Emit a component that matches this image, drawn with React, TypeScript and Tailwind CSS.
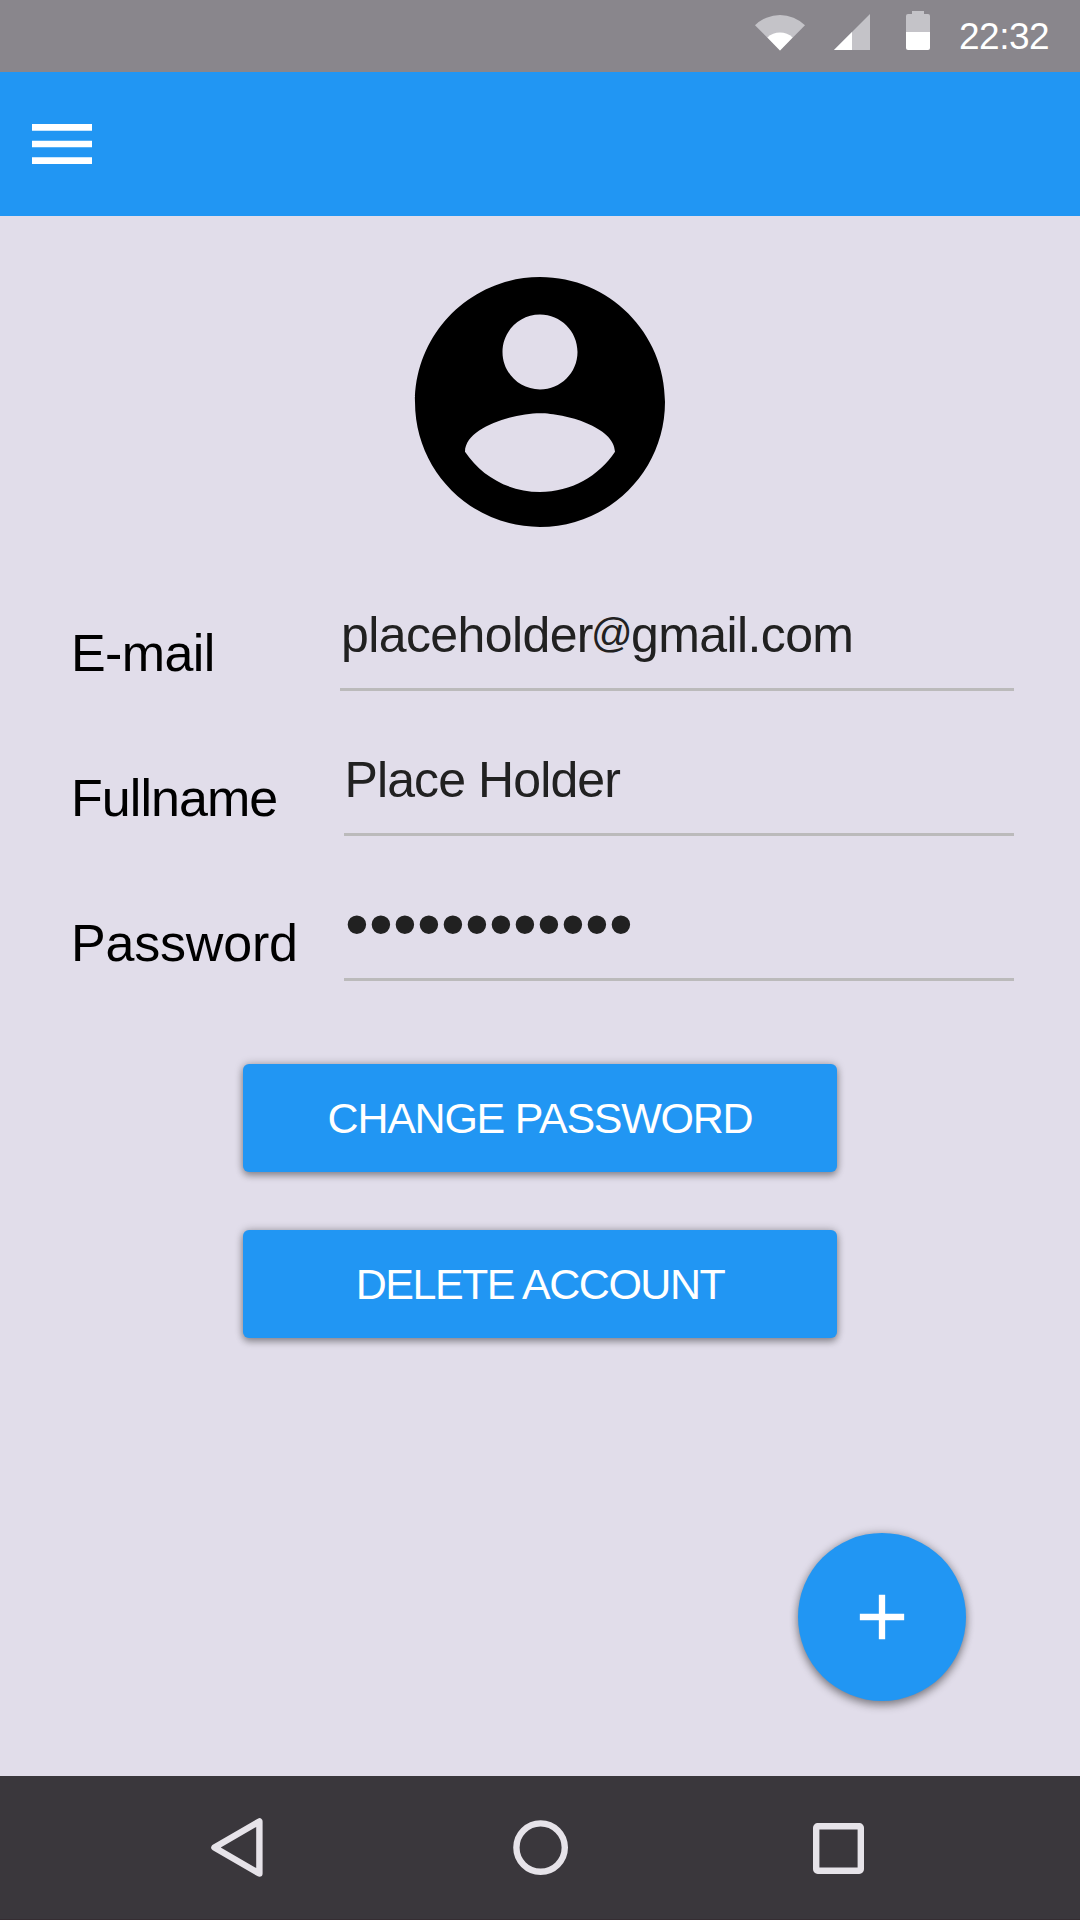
import type { ReactNode } from "react";

function StatusBar() {
  return (
    <header className="flex h-[72px] items-center bg-[#89868c] pl-[755px] text-white">
      <svg className="-mt-[7px] h-[37px] w-[50px]" viewBox="0 0 50 37">
        <path d="M25 36.5 0 11.2A35.8 35.8 0 0 1 50 11.2Z" fill="#c4c3c8" />
        <path d="M25 36.5 12.4 23.6A18 18 0 0 1 37.6 23.6Z" fill="#fff" />
      </svg>
      <svg className="-mt-[8px] ml-[29px] h-[36px] w-[36px]" viewBox="0 0 36 36">
        <path d="M0 36 36 0V36Z" fill="#c4c3c8" />
        <path d="M0 36 18 18V36Z" fill="#fff" />
      </svg>
      <svg className="-mt-[11px] ml-[36px] h-[39px] w-[24px]" viewBox="0 0 24 39">
        <path d="M6 0H18V3H22a2 2 0 0 1 2 2V21H0V5A2 2 0 0 1 2 3H6Z" fill="#c4c3c8" />
        <path d="M0 21H24V37a2 2 0 0 1-2 2H2a2 2 0 0 1-2-2Z" fill="#fff" />
      </svg>
      <span className="ml-[29px] pt-[2px] text-[37px] leading-[70px] tracking-[-0.5px]">22:32</span>
    </header>
  );
}

function AppBar() {
  return (
    <nav className="flex h-[144px] items-center bg-[#2196f3] pl-[22px]">
      <button aria-label="Menu">
        <svg className="block size-[80px]" viewBox="0 0 24 24" fill="#fff">
          <path d="M3 18h18v-2H3v2zm0-5h18v-2H3v2zm0-7v2h18V6H3z" />
        </svg>
      </button>
    </nav>
  );
}

function Field({ label, labelClass, inputClass, children }: { label: string; labelClass: string; inputClass: string; children: ReactNode }) {
  return (
    <div className="flex h-[145px] items-end justify-between pr-[66px] pl-[71px]">
      <span className={`text-[52px] leading-[76px] text-black ${labelClass}`}>{label}</span>
      <div className={`h-[110px] border-b-[3px] border-[#bbbabb] text-[50px] whitespace-nowrap text-[#212121] ${inputClass}`}>
        {children}
      </div>
    </div>
  );
}

function RaisedButton({ className, children }: { className: string; children: ReactNode }) {
  return (
    <button
      className={`h-[108px] w-[594px] rounded-[6px] bg-[#2196f3] text-center text-[43px] leading-[108px] whitespace-nowrap text-white shadow-[0_0_8px_rgba(0,0,0,0.28),0_4px_7px_rgba(0,0,0,0.28)] ${className}`}
    >
      {children}
    </button>
  );
}

export default function App() {
  return (
    <div className="flex h-[1920px] w-[1080px] flex-col overflow-hidden bg-[#e1ddea] font-['Liberation_Sans',Arial,sans-serif]">
      <StatusBar />
      <AppBar />
      <main className="flex flex-1 flex-col">
        <svg className="mt-[36px] size-[300px] self-center" viewBox="0 0 24 24" fill="#000">
          <path d="M12 2C6.48 2 2 6.48 2 12s4.48 10 10 10 10-4.48 10-10S17.52 2 12 2zm0 3c1.66 0 3 1.34 3 3s-1.34 3-3 3-3-1.34-3-3 1.34-3 3-3zm0 14.2c-2.5 0-4.71-1.28-6-3.22.03-1.99 4-3.08 6-3.08 1.99 0 5.97 1.09 6 3.08-1.29 1.94-3.5 3.22-6 3.22z" />
        </svg>
        <section className="-mt-[6px] flex flex-col">
          <Field label="E-mail" labelClass="tracking-[-0.6px]" inputClass="w-[674px] pl-[1px] leading-[109px] tracking-[-0.6px]">
            placeholder<span className="relative -top-[5px] -mr-[1px] -ml-[2px] text-[41px] leading-none">@</span>gmail.com
          </Field>
          <Field label="Fullname" labelClass="tracking-[-0.95px]" inputClass="w-[670px] pl-[0.5px] leading-[109px] tracking-[-0.9px]">
            Place Holder
          </Field>
          <Field label="Password" labelClass="tracking-[-0.2px]" inputClass="w-[670px] pl-[1px]">
            <span className="block text-[68px] leading-[105px] tracking-[0.2px]">••••••••••••</span>
          </Field>
        </section>
        <section className="mt-[83px] flex flex-col items-center gap-[58px]">
          <RaisedButton className="tracking-[-1.25px]">CHANGE PASSWORD</RaisedButton>
          <RaisedButton className="tracking-[-1.5px]">DELETE ACCOUNT</RaisedButton>
        </section>
        <button
          aria-label="Add"
          className="mt-[195px] mr-[114px] flex size-[168px] items-center justify-center self-end rounded-full bg-[#2196f3] shadow-[0_0_8px_rgba(0,0,0,0.28),0_5px_8px_rgba(0,0,0,0.3)]"
        >
          <svg className="size-[76px]" viewBox="0 0 24 24" fill="#fff">
            <path d="M19 13h-6v6h-2v-6H5v-2h6V5h2v6h6v2z" />
          </svg>
        </button>
      </main>
      <footer className="flex h-[144px] items-center border-b border-[#352d32] bg-[#3a373c] pt-px pl-[211px]">
        <svg className="h-[60px] w-[52px]" viewBox="0 0 52 60" fill="none" stroke="#e6e3e9" strokeWidth="6.4" strokeLinejoin="round">
          <path d="M3.4 29.5 48.4 3.4V55.6Z" />
        </svg>
        <svg className="ml-[250px] h-[56px] w-[56px]" viewBox="0 0 56 56" fill="none" stroke="#e6e3e9" strokeWidth="6.4">
          <circle cx="27.6" cy="27.6" r="24.2" />
        </svg>
        <svg className="mt-[1px] ml-[244px] size-[51px]" viewBox="0 0 51 51" fill="none" stroke="#e6e3e9" strokeWidth="6.4" strokeLinejoin="round">
          <rect x="3.2" y="3.2" width="44.6" height="44.6" rx="1.5" />
        </svg>
      </footer>
    </div>
  );
}
